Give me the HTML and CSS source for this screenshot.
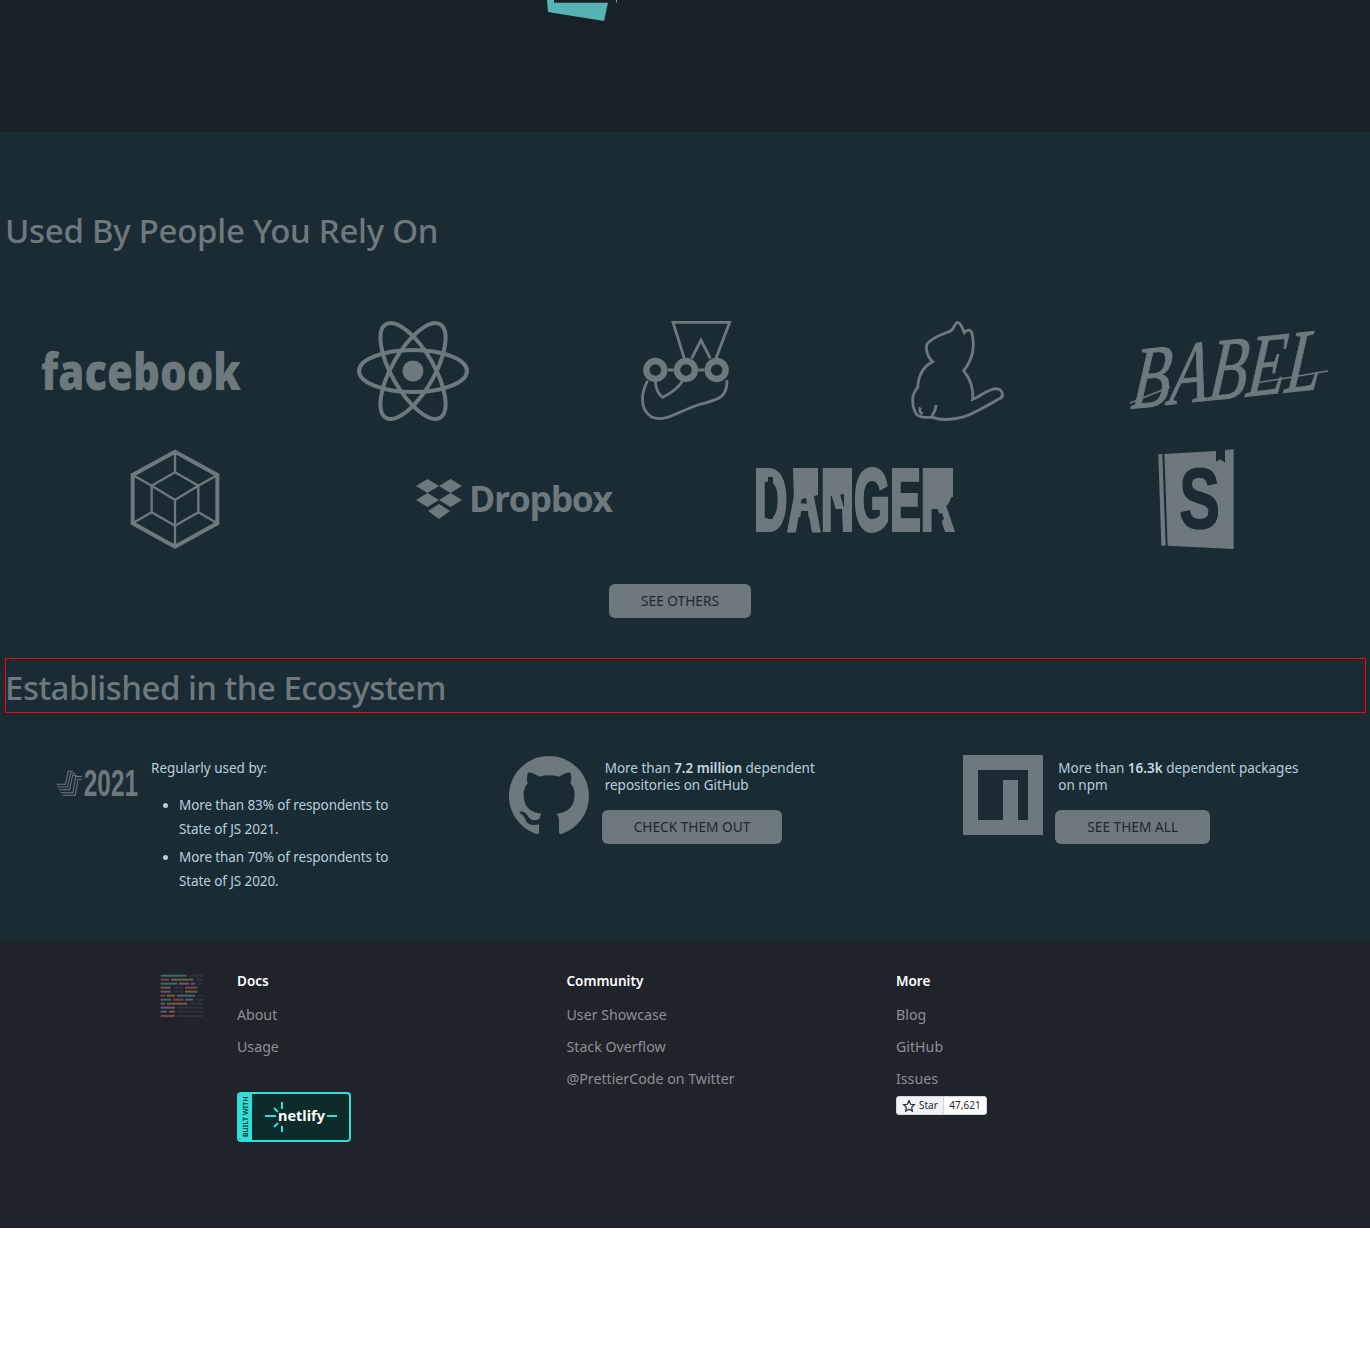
FILE: index.html
```html
<!DOCTYPE html>
<html lang="en">
<head>
<meta charset="utf-8">
<title>Prettier</title>
<link rel="stylesheet" href="styles.css">
</head>
<body>
<header class="hero">
  <svg class="hero-logo" width="72" height="22" viewBox="0 0 72 22"><polygon class="teal" points="0,0 1,12 57,21 61,2.7 7,2.7 7,0"/><rect class="teal" x="69" y="0" width="1" height="2.5"/></svg>
</header>
<main class="main">
  <h2 class="heading">Used By People You Rely On</h2>
  <div class="logo-row first">
    <div class="logo"><svg class="lg" viewBox="0 0 200 100"><text class="fb" x="0" y="69" textLength="200" lengthAdjust="spacingAndGlyphs">facebook</text></svg></div>
    <div class="logo"><svg class="lg" viewBox="-56 -50 200 100"><g transform="translate(44 0)" class="line s4"><ellipse rx="54" ry="21"/><ellipse rx="54" ry="21" transform="rotate(60)"/><ellipse rx="54" ry="21" transform="rotate(-60)"/><circle class="fill" r="10.5"/></g></svg></div>
    <div class="logo"><svg class="lg" viewBox="-105 33 600 300"><g class="line s8"><path d="M190 145 L156 37 H326 L285 145"/><path d="M212 145 L240 90 L268 145"/><path d="M80 212 C60 250 55 295 90 320 C130 340 170 305 230 285 C280 270 320 270 318 210"/><path d="M103 215 C105 240 115 255 125 262 C150 250 170 235 185 213"/><path d="M140 180 H158 M232 180 H250"/><circle class="s19" cx="103" cy="180" r="27"/><circle class="s19" cx="195" cy="180" r="27"/><circle class="s19" cx="287" cy="180" r="27"/></g></svg></div>
    <div class="logo"><svg class="lg" viewBox="711 33 600 300"><g class="line s9"><path d="M1010 37 C1020 38 1024 55 1030 68 C1040 56 1052 58 1054 75 C1060 105 1058 145 1028 182 C1050 210 1058 240 1055 268 C1080 258 1100 238 1125 236 C1145 238 1150 258 1138 265 C1100 285 1060 310 1030 320 C1000 328 960 332 935 322 C915 322 890 325 882 305 C872 285 870 255 890 232 C892 200 905 170 935 155 C915 135 910 105 925 95 C945 78 965 72 985 65 C1000 60 1000 37 1010 37 Z"/><path d="M945 285 C945 300 938 310 932 318 M898 292 C894 300 897 308 905 312"/></g></svg></div>
    <div class="logo"><svg class="lg" viewBox="0 0 200 100"><g transform="rotate(-6 100 50) skewX(-12)"><text class="babel" x="13" y="77" textLength="190" lengthAdjust="spacingAndGlyphs">BABEL</text></g><path class="line s1" d="M0 82 L40 66 M126 62 L198 50"/></svg></div>
  </div>
  <div class="logo-row">
    <div class="logo"><svg class="lg" viewBox="165 417 600 300"><g class="line"><polygon class="s12" points="465,425 592,495 592,640 465,710 338,640 338,495"/><g class="s7"><polygon points="465,487 535,527 535,607 465,647 395,607 395,527"/><path d="M395 527 L465 570 L535 527 M465 570 V647 M465 425 V487 M338 495 L395 527 M592 495 L535 527 M338 640 L395 607 M592 640 L535 607 M465 710 V647"/></g></g></svg></div>
    <div class="logo dropbox"><svg class="db-icon" viewBox="0 0 46 40"><g class="fill"><polygon points="11.5,0 23,7 11.5,14 0,7"/><polygon points="34.5,0 46,7 34.5,14 23,7"/><polygon points="11.5,14 23,21 11.5,28 0,21"/><polygon points="34.5,14 46,21 34.5,28 23,21"/><polygon points="23,25 34,32 23,40 12,32"/></g></svg><span class="db-text">Dropbox</span></div>
    <div class="logo"><svg class="lg" viewBox="0 0 200 100"><text class="danger" x="-2" y="81" textLength="200" lengthAdjust="spacingAndGlyphs">DANGER</text><path class="fill" d="M37 19 H62 V46 L38 52 Z M70 19 H94 V44 L71 48 Z M168 19 H197 V48 H170 Z"/><path class="cut" d="M43 82 L45 62 L52 62 L54 82 Z M78 82 L80 60 L86 60 L87 82 Z M176 82 L178 66 L186 64 L188 70 Z M12 28 H17 V70 H12 Z"/></svg></div>
    <div class="logo"><svg class="lg" viewBox="285 417 600 300"><g class="fill"><polygon points="472,433 484,432 494,707 481,707"/><polygon points="490,432 645,423 645,455 658,448 672,458 672,420 698,418 698,717 500,707"/></g><text class="sb" x="535" y="654" textLength="122" lengthAdjust="spacingAndGlyphs">S</text></svg></div>
  </div>
  <div class="center"><a class="btn">See Others</a></div>
  <h2 class="heading boxed">Established in the Ecosystem</h2>
  <div class="eco">
    <section class="eco-col">
      <svg class="js-logo" viewBox="168 360 242 78"><g class="line s3"><path d="M170 403 H196 L204 364 H218 M172 411 H202 L211 370 H224 M176 419 H208 L217 376 H230"/><path d="M244 380 H226 L218 428 H182 M244 388 H233 L225 435 H188"/></g><text class="js-year" x="250" y="437" textLength="160" lengthAdjust="spacingAndGlyphs">2021</text></svg>
      <div class="eco-text">
        <p class="lead">Regularly used by:</p>
        <ul class="list">
          <li>More than 83% of respondents to State of JS 2021.</li>
          <li>More than 70% of respondents to State of JS 2020.</li>
        </ul>
      </div>
    </section>
    <section class="eco-col">
      <svg class="mark gh" viewBox="0 0 16 16"><path class="fill" d="M8 0C3.58 0 0 3.58 0 8c0 3.54 2.29 6.53 5.47 7.59.4.07.55-.17.55-.38 0-.19-.01-.82-.01-1.49-2.01.37-2.53-.49-2.69-.94-.09-.23-.48-.94-.82-1.13-.28-.15-.68-.52-.01-.53.63-.01 1.08.58 1.23.82.72 1.21 1.87.87 2.33.66.07-.52.28-.87.51-1.07-1.78-.2-3.64-.89-3.64-3.95 0-.87.31-1.59.82-2.15-.08-.2-.36-1.02.08-2.12 0 0 .67-.21 2.2.82.64-.18 1.32-.27 2-.27.68 0 1.36.09 2 .27 1.53-1.04 2.2-.82 2.2-.82.44 1.1.16 1.92.08 2.12.51.56.82 1.27.82 2.15 0 3.07-1.87 3.75-3.65 3.95.29.25.54.73.54 1.48 0 1.07-.01 1.93-.01 2.2 0 .21.15.46.55.38A8.013 8.013 0 0016 8c0-4.42-3.58-8-8-8z"/></svg>
      <div class="eco-text">
        <p class="lead two">More than <strong>7.2 million</strong> dependent repositories on GitHub</p>
        <a class="btn shift">Check Them Out</a>
      </div>
    </section>
    <section class="eco-col">
      <svg class="mark" viewBox="0 0 80 80"><path class="fill" fill-rule="evenodd" d="M0 0H80V80H0Z M15 15V65H40V25H55V65H65V15Z"/></svg>
      <div class="eco-text">
        <p class="lead two">More than <strong>16.3k</strong> dependent packages on npm</p>
        <a class="btn shift">See Them All</a>
      </div>
    </section>
  </div>
</main>
<footer class="footer">
  <svg class="foot-logo" viewBox="30 40 132 135"><g class="mini">
    <g class="t"><rect x="32" y="45" width="78" height="6"/><rect x="32" y="69" width="50" height="6"/><rect x="123" y="69" width="13" height="6"/><rect x="81" y="105" width="54" height="6"/><rect x="32" y="117" width="31" height="6"/><rect x="32" y="153" width="18" height="6"/></g>
    <g class="r"><rect x="32" y="57" width="25" height="6"/><rect x="105" y="81" width="37" height="6"/><rect x="32" y="105" width="13" height="6"/><rect x="69" y="117" width="31" height="6"/><rect x="32" y="166" width="43" height="6"/></g>
    <g class="y"><rect x="63" y="57" width="67" height="6"/><rect x="32" y="81" width="30" height="6"/><rect x="105" y="93" width="37" height="6"/><rect x="50" y="105" width="25" height="6"/><rect x="50" y="129" width="62" height="6"/><rect x="57" y="153" width="18" height="6"/></g>
    <g class="p"><rect x="87" y="69" width="31" height="6"/><rect x="32" y="93" width="30" height="6"/><rect x="105" y="117" width="25" height="6"/><rect x="32" y="129" width="13" height="6"/><rect x="32" y="141" width="43" height="6"/></g>
    <g class="d"><rect x="118" y="45" width="42" height="6"/><rect x="138" y="57" width="22" height="6"/><rect x="142" y="69" width="18" height="6"/><rect x="70" y="81" width="30" height="6"/><rect x="70" y="93" width="30" height="6"/><rect x="142" y="105" width="18" height="6"/><rect x="136" y="117" width="24" height="6"/><rect x="118" y="129" width="42" height="6"/><rect x="81" y="141" width="79" height="6"/><rect x="81" y="153" width="79" height="6"/><rect x="81" y="166" width="79" height="6"/></g>
  </g></svg>
  <div class="foot-col">
    <h5 class="foot-title">Docs</h5>
    <a class="foot-link">About</a>
    <a class="foot-link">Usage</a>
    <div class="netlify">
      <span class="nf-side">BUILT WITH</span>
      <svg class="nf-main" viewBox="0 0 97 46"><g class="nf-lines"><path d="M13 22 H24 M30 8 V15 M30 32 V38 M85 22 H75 M22 14 L26 18 M22 33 L26 29"/></g><text class="nf-text" x="26" y="27">netlify</text></svg>
    </div>
  </div>
  <div class="foot-col">
    <h5 class="foot-title">Community</h5>
    <a class="foot-link">User Showcase</a>
    <a class="foot-link">Stack Overflow</a>
    <a class="foot-link">@PrettierCode on Twitter</a>
  </div>
  <div class="foot-col">
    <h5 class="foot-title">More</h5>
    <a class="foot-link">Blog</a>
    <a class="foot-link">GitHub</a>
    <a class="foot-link">Issues</a>
    <div class="star"><span class="star-btn"><svg class="star-icon" viewBox="0 0 24 24"><path d="M12 3l2.800 6 6.400.8-4.700 4.400 1.200 6.400L12 17.400l-5.700 3.200 1.200-6.400L2.800 9.800l6.400-.8z"/></svg>Star</span><span class="star-count">47,621</span></div>
  </div>
</footer>
</body>
</html>
```
FILE: styles.css
```css
* { box-sizing: border-box; }
html, body { margin: 0; padding: 0; background: #fff; }
body { font-family: "Noto Sans", "Open Sans", sans-serif; }
.hero { height: 132px; background: #1a2028; padding-left: 547px; }
.hero-logo { display: block; }
.teal { fill: #56b3b4; }
.main { height: 809px; background: #1b2b34; padding: 72px 4px 0 5px; }
.heading { height: 55px; margin: 0; font-size: 33px; line-height: 53px; font-weight: 500; letter-spacing: -.28px; color: #6e797f; white-space: nowrap; }
.boxed { border: 1px solid #f00; line-height: 57px; margin-top: 40px; letter-spacing: -.5px; text-indent: -1px; }
.logo-row { display: flex; margin-top: 28px; }
.logo-row.first { margin-top: 62px; }
.logo { flex: 1; display: flex; justify-content: center; align-items: center; height: 100px; }
.lg { width: 200px; height: 100px; display: block; overflow: visible; }
.line { fill: none; stroke: #6e797f; }
.fill { fill: #6e797f; stroke: none; }
.s1 { stroke-width: 1.500; }
.s3 { stroke-width: 3; }
.s4 { stroke-width: 4; }
.s7 { stroke-width: 7; }
.s8 { stroke-width: 8.500; }
.s9 { stroke-width: 8.500; }
.s12 { stroke-width: 12; }
.s19 { stroke-width: 19; }
.fb { font: 800 52px "Open Sans", sans-serif; fill: #6e797f; }
.babel { font: italic 400 88px "Liberation Serif", serif; fill: #6e797f; stroke: #6e797f; stroke-width: 1px; }
.danger { font: 700 88px "Liberation Sans Narrow", "Liberation Sans", sans-serif; fill: #6e797f; stroke: #6e797f; stroke-width: 4px; }
.cut { fill: #1b2b34; }
.sb { font: 700 258px "Liberation Sans", sans-serif; fill: #1b2b34; stroke: #1b2b34; stroke-width: 5px; }
.dropbox { gap: 7px; padding-right: 0; }
.db-icon { width: 46px; height: 40px; margin-left: -3px; }
.db-text { font: 700 35.500px/1 "Open Sans", sans-serif; color: #6e797f; letter-spacing: -1.300px; }
.center { display: flex; justify-content: center; margin-top: 35px; padding-right: 11px; }
.btn { display: inline-block; height: 34px; padding: 0 32px; border-radius: 6px; background: #6e797f; color: #20272e; font-size: 13.700px; line-height: 34px; text-transform: uppercase; white-space: nowrap; }
.eco { display: grid; grid-template-columns: repeat(3, 1fr); margin-top: 42px; }
.eco-col { display: flex; align-items: flex-start; padding-left: 51px; gap: 15px; }
.mark { width: 80px; height: 80px; flex: none; }
.gh { margin: 1px 1px 0 -1px; }
.js-logo { width: 82px; height: 28px; flex: none; margin: 14px -2px 0 0; overflow: visible; }
.js-year { font: 700 107px "Liberation Sans Narrow", "Liberation Sans", sans-serif; fill: #6e797f; }
.eco-text { color: #b5d0de; font-size: 13.500px; }
.lead { margin: 5px 0 0; line-height: 17px; }
.lead.two { width: 246px; }
.lead.two strong { font-weight: 600; color: #c3d9e4; }
.list { margin: 16px 0 0; padding-left: 28px; width: 262px; line-height: 24px; letter-spacing: -.1px; }
.list li { margin-bottom: 4px; }
.list li::marker { color: #b5d0de; }
.shift { margin: 16px 0 0 -3px; }
.footer { height: 287px; background: #20232a; display: grid; grid-template-columns: 77px 329.500px 329.500px 1fr; padding: 32px 0 0 160px; }
.foot-logo { width: 44px; height: 45px; }
.mini { opacity: .5; }
.t { fill: #56b3b4; }
.r { fill: #ea5e5e; }
.y { fill: #bf9c4f; }
.p { fill: #bf85bf; }
.d { fill: #34444b; }
.foot-col { display: flex; flex-direction: column; align-items: flex-start; }
.foot-title { margin: 0 0 9px; font-size: 13.500px; line-height: 17px; font-weight: 600; color: #fff; }
.foot-link { font-size: 14.200px; line-height: 32px; color: #8b9197; white-space: nowrap; }
.netlify { display: flex; width: 114px; height: 50px; margin-top: 29px; border: 2px solid #30e0d6; border-radius: 4px; background: #0d2b2b; overflow: hidden; }
.nf-side { writing-mode: vertical-rl; transform: rotate(180deg); width: 13px; background: #30e0d6; color: #0d2b2b; font-size: 7px; line-height: 13px; font-weight: 600; text-align: center; white-space: nowrap; }
.nf-main { width: 97px; height: 46px; }
.nf-lines { fill: none; stroke: #30e0d6; stroke-width: 2; }
.nf-text { font: 700 14.500px "Noto Sans", sans-serif; fill: #fff; }
.star { display: flex; height: 19px; margin-top: 1px; font-size: 10px; line-height: 17px; color: #24292e; border-radius: 3px; background: #fff; border: 1px solid #d5d7da; }
.star-btn { display: flex; align-items: center; gap: 3px; padding: 0 5px; background: #eff3f6; border-right: 1px solid #d5d7da; border-radius: 3px 0 0 3px; }
.star-icon { width: 14px; height: 14px; fill: none; stroke: #24292e; stroke-width: 2; }
.star-count { padding: 0 5.500px; }
```
